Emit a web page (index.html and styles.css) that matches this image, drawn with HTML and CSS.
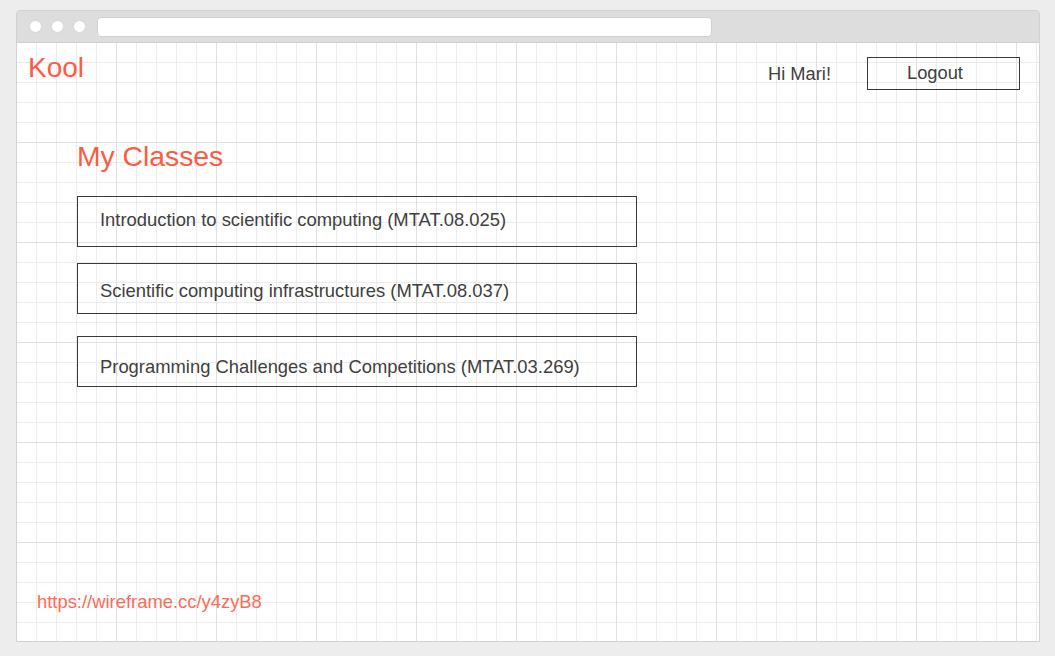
FILE: index.html
```html
<!DOCTYPE html>
<html lang="en">
<head>
<meta charset="utf-8">
<title>Kool - My Classes</title>
<link rel="stylesheet" href="styles.css">
</head>
<body>
<div class="browser">
  <div class="titlebar">
    <span class="dot"></span>
    <span class="dot"></span>
    <span class="dot"></span>
    <span class="urlbar"></span>
  </div>
  <div class="page">
    <header class="header">
      <div class="logo">Kool</div>
      <div class="user">
        <span class="greeting">Hi Mari!</span>
        <span class="logout">Logout</span>
      </div>
    </header>
    <main class="main">
      <h1 class="title">My Classes</h1>
      <ul class="classes">
        <li class="class-item class-item--first">Introduction to scientific computing (MTAT.08.025)</li>
        <li class="class-item class-item--second">Scientific computing infrastructures (MTAT.08.037)</li>
        <li class="class-item class-item--third">Programming Challenges and Competitions (MTAT.03.269)</li>
      </ul>
    </main>
    <footer class="footer">
      <span class="link">https://wireframe.cc/y4zyB8</span>
    </footer>
  </div>
</div>
</body>
</html>
```
FILE: styles.css
```css
html, body {
  margin: 0;
  padding: 0;
}

body {
  background: #ededed;
  font-family: "Liberation Sans", Arial, sans-serif;
  color: #404040;
}

.browser {
  box-sizing: border-box;
  width: 1024px;
  height: 632px;
  margin: 10px 0 0 16px;
  border: 1px solid #d2d2d2;
  border-radius: 4px 4px 0 0;
  display: flex;
  flex-direction: column;
  overflow: hidden;
}

.titlebar {
  box-sizing: border-box;
  height: 32px;
  flex: 0 0 32px;
  background: #dddddd;
  border-bottom: 1px solid #d0d0d0;
  display: flex;
  align-items: center;
  padding-left: 12px;
  gap: 9px;
}

.dot {
  box-sizing: border-box;
  width: 13px;
  height: 13px;
  border-radius: 50%;
  background: #ffffff;
  border: 1px solid #d6d6d6;
}

.urlbar {
  box-sizing: border-box;
  width: 615px;
  height: 20px;
  margin-left: 2px;
  background: #ffffff;
  border: 1px solid #d0d0d0;
  border-radius: 4px;
}

.page {
  flex: 1;
  display: flex;
  flex-direction: column;
  background-color: #ffffff;
  background-image:
    linear-gradient(to right, transparent 99px, #e0e0e0 99px),
    linear-gradient(to bottom, transparent 99px, #e0e0e0 99px),
    linear-gradient(to right, transparent 19px, #ececec 19px),
    linear-gradient(to bottom, transparent 19px, #ececec 19px);
  background-size: 100px 100px, 100px 100px, 20px 20px, 20px 20px;
}

.header {
  display: flex;
  justify-content: space-between;
  align-items: flex-start;
  padding: 0 19px 0 11px;
}

.logo {
  margin-top: 9px;
  font-size: 28px;
  line-height: 32px;
  color: #fb5c45;
}

.user {
  margin-top: 14px;
  display: flex;
  align-items: center;
  gap: 36px;
}

.greeting {
  font-size: 18.3px;
  line-height: 21px;
}

.logout {
  box-sizing: border-box;
  width: 153px;
  height: 33px;
  padding-left: 39px;
  border: 1px solid #3a3a3a;
  font-size: 18.3px;
  line-height: 29px;
}

.main {
  padding-left: 60px;
}

.title {
  margin: 50px 0 0 0;
  font-size: 28.3px;
  line-height: 32px;
  font-weight: normal;
  color: #fb5c45;
}

.classes {
  list-style: none;
  margin: 24px 0 0 0;
  padding: 0;
}

.class-item {
  box-sizing: border-box;
  width: 560px;
  height: 51px;
  border: 1px solid #3a3a3a;
  padding-left: 22px;
  font-size: 18.4px;
  line-height: 21px;
}

.class-item--first {
  padding-top: 12px;
}

.class-item--second {
  margin-top: 16px;
  padding-top: 16px;
}

.class-item--third {
  margin-top: 22px;
  padding-top: 19px;
}

.footer {
  margin-top: auto;
  padding: 0 0 29px 20px;
}

.link {
  font-size: 18.4px;
  line-height: 20px;
  color: #ff6a57;
}
```
